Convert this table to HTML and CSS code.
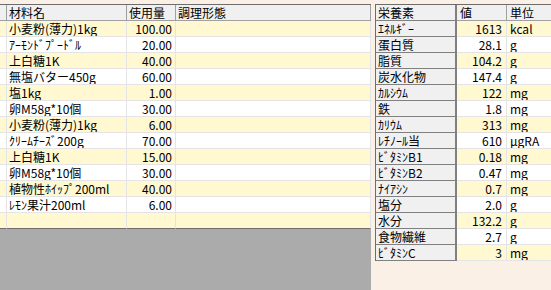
FILE: index.html
```html
<!DOCTYPE html>
<html lang="ja">
<head>
<meta charset="utf-8">
<link rel="stylesheet" href="styles.css">
</head>
<body>
<div class="page">
  <div class="grid">
    <div class="row head">
      <div class="c0"></div><div class="c1">材料名</div><div class="c2">使用量</div><div class="c3">調理形態</div>
    </div>
    <div class="row y"><div class="c0"></div><div class="c1">小麦粉(薄力)1kg</div><div class="c2">100.00</div><div class="c3"></div></div>
    <div class="row w"><div class="c0"></div><div class="c1">ｱｰﾓﾝﾄﾞﾌﾟｰﾄﾞﾙ</div><div class="c2">20.00</div><div class="c3"></div></div>
    <div class="row y"><div class="c0"></div><div class="c1">上白糖1K</div><div class="c2">40.00</div><div class="c3"></div></div>
    <div class="row w"><div class="c0"></div><div class="c1">無塩バター450g</div><div class="c2">60.00</div><div class="c3"></div></div>
    <div class="row y"><div class="c0"></div><div class="c1">塩1kg</div><div class="c2">1.00</div><div class="c3"></div></div>
    <div class="row w"><div class="c0"></div><div class="c1">卵M58g*10個</div><div class="c2">30.00</div><div class="c3"></div></div>
    <div class="row y"><div class="c0"></div><div class="c1">小麦粉(薄力)1kg</div><div class="c2">6.00</div><div class="c3"></div></div>
    <div class="row w"><div class="c0"></div><div class="c1">ｸﾘｰﾑﾁｰｽﾞ200g</div><div class="c2">70.00</div><div class="c3"></div></div>
    <div class="row y"><div class="c0"></div><div class="c1">上白糖1K</div><div class="c2">15.00</div><div class="c3"></div></div>
    <div class="row w"><div class="c0"></div><div class="c1">卵M58g*10個</div><div class="c2">30.00</div><div class="c3"></div></div>
    <div class="row y"><div class="c0"></div><div class="c1">植物性ﾎｲｯﾌﾟ200ml</div><div class="c2">40.00</div><div class="c3"></div></div>
    <div class="row w"><div class="c0"></div><div class="c1">ﾚﾓﾝ果汁200ml</div><div class="c2">6.00</div><div class="c3"></div></div>
    <div class="row y last"><div class="c0"></div><div class="c1"></div><div class="c2"></div><div class="c3"></div></div>
    <div class="empty"></div>
  </div>
  <div class="panel">
    <div class="nrow nhead"><div class="lab">栄養素</div><div class="val">値</div><div class="unit">単位</div></div>
    <div class="nrow y"><div class="lab">ｴﾈﾙｷﾞｰ</div><div class="val">1613</div><div class="unit">kcal</div></div>
    <div class="nrow w"><div class="lab">蛋白質</div><div class="val">28.1</div><div class="unit">g</div></div>
    <div class="nrow y"><div class="lab">脂質</div><div class="val">104.2</div><div class="unit">g</div></div>
    <div class="nrow w"><div class="lab">炭水化物</div><div class="val">147.4</div><div class="unit">g</div></div>
    <div class="nrow y"><div class="lab">ｶﾙｼｳﾑ</div><div class="val">122</div><div class="unit">mg</div></div>
    <div class="nrow w"><div class="lab">鉄</div><div class="val">1.8</div><div class="unit">mg</div></div>
    <div class="nrow y"><div class="lab">ｶﾘｳﾑ</div><div class="val">313</div><div class="unit">mg</div></div>
    <div class="nrow w"><div class="lab">ﾚﾁﾉｰﾙ当</div><div class="val">610</div><div class="unit">μgRA</div></div>
    <div class="nrow y"><div class="lab">ﾋﾞﾀﾐﾝB1</div><div class="val">0.18</div><div class="unit">mg</div></div>
    <div class="nrow w"><div class="lab">ﾋﾞﾀﾐﾝB2</div><div class="val">0.47</div><div class="unit">mg</div></div>
    <div class="nrow y"><div class="lab">ﾅｲｱｼﾝ</div><div class="val">0.7</div><div class="unit">mg</div></div>
    <div class="nrow w"><div class="lab">塩分</div><div class="val">2.0</div><div class="unit">g</div></div>
    <div class="nrow y"><div class="lab">水分</div><div class="val">132.2</div><div class="unit">g</div></div>
    <div class="nrow w"><div class="lab">食物繊維</div><div class="val">2.7</div><div class="unit">g</div></div>
    <div class="nrow y"><div class="lab">ﾋﾞﾀﾐﾝC</div><div class="val">3</div><div class="unit">mg</div></div>
  </div>
</div>
</body>
</html>
```

FILE: styles.css
```css
* { box-sizing: border-box; }
html, body { margin: 0; padding: 0; }
body {
  width: 551px;
  height: 290px;
  overflow: hidden;
  background: #faf0e6;
  font-family: "Noto Sans CJK JP", "Noto Sans", sans-serif;
  font-size: 12px;
  color: #000;
}
.page {
  display: flex;
  align-items: flex-start;
  padding-top: 4px;
  gap: 4px;
  width: 551px;
}
.grid {
  width: 371px;
  height: 286px;
  flex: none;
  display: flex;
  flex-direction: column;
  border-top: 1px solid #6d6d6d;
  background: #ababab;
}
.row {
  display: grid;
  grid-template-columns: 7px 120px 49px 1fr;
  height: 16px;
  flex: none;
}
.row > div {
  border-right: 1px solid #e4e4e4;
  border-bottom: 1px solid #e4e4e4;
  line-height: 15px;
  white-space: nowrap;
  overflow: hidden;
}
.row .c1 { padding-left: 2px; }
.row .c2 { text-align: right; padding-right: 3px; }
.row.y > div { background: #fff8d0; }
.row.w > div { background: #ffffff; }
.row.head > div {
  background: #f0f0f0;
  border-right: 1px solid #a0a0a0;
  border-bottom: 1px solid #a0a0a0;
  padding-left: 2px;
}
.row.head .c2 { text-align: left; padding-right: 0; }
.row.last > div { border-bottom: 1px solid #6d6d6d; }
.empty { flex: 1; }

.panel {
  flex: 1;
  min-width: 0;
  border-top: 1px solid #6d6d6d;
  border-left: 1px solid #6d6d6d;
  background: #fff;
}
.nrow {
  display: grid;
  grid-template-columns: 81px 50px 1fr;
  height: 16px;
}
.nrow > div {
  line-height: 15px;
  white-space: nowrap;
  overflow: hidden;
  border-bottom: 1px solid #e4e4e4;
  border-right: 1px solid #e4e4e4;
}
.nrow .unit { border-right: none; }
.nrow .lab {
  background: #f0f0f0;
  border-right: 2px solid #808080;
  border-bottom: 1px solid #808080;
  padding-left: 2px;
}
.nrow .val { text-align: right; padding-right: 4px; }
.nrow .unit { padding-left: 3px; }
.nrow.y .val, .nrow.y .unit { background: #fff8d0; }
.nrow.w .val, .nrow.w .unit { background: #ffffff; }
.nrow.nhead > div {
  background: #f0f0f0;
  border-right: 1px solid #a0a0a0;
  border-bottom: 1px solid #a0a0a0;
  padding-left: 3px;
  text-align: left;
}
.nrow.nhead .unit { border-right: none; }
.nrow.nhead .lab { border-right: 2px solid #808080; border-bottom: 1px solid #808080; padding-left: 2px; }
```
